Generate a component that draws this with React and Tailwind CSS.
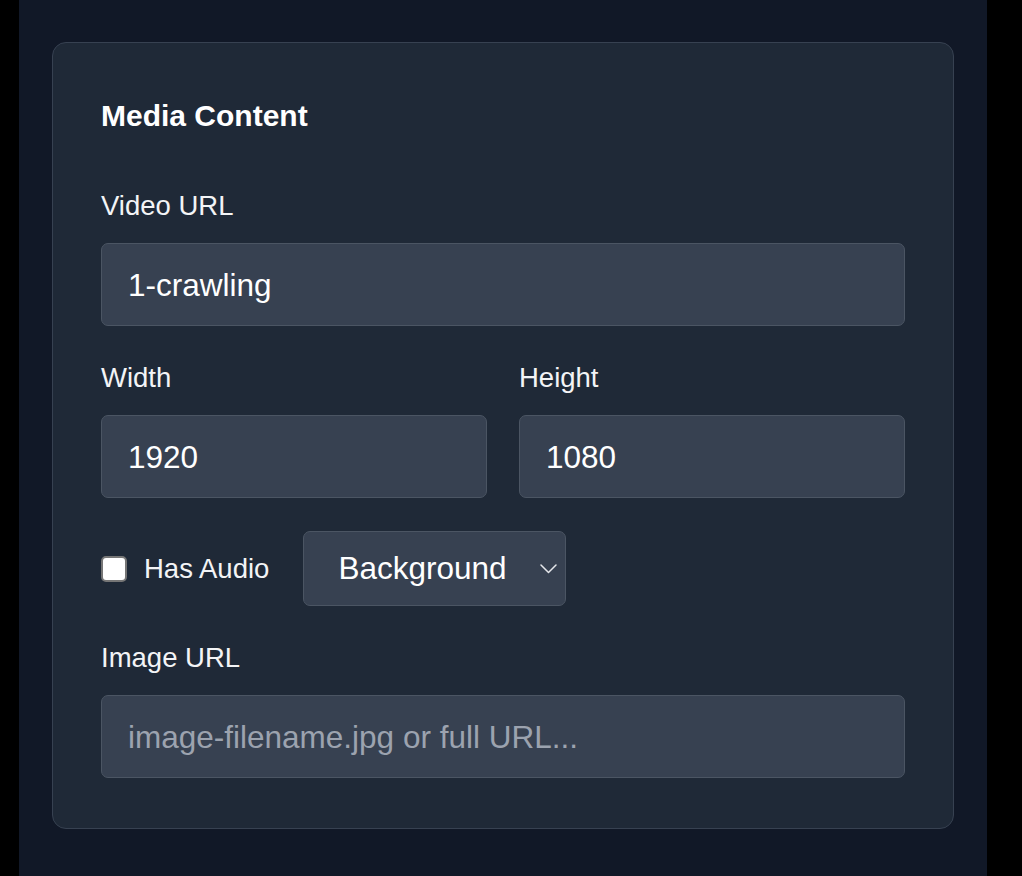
import React from 'react';

const font = { fontFamily: '"Liberation Sans", Arial, sans-serif' };

function Label({ children, className = '' }) {
  return <div className={`text-[27.5px] leading-[42px] text-gray-100 mb-[16px] ${className}`}>{children}</div>;
}

function Field({ value, placeholder }) {
  return (
    <div className="h-[83px] flex items-center px-[26px] pt-[2px] bg-[#374151] border border-[#4b5563] rounded-[7px] text-[31.5px]">
      {value ? <span className="text-white">{value}</span> : <span className="text-[#9ca3af]">{placeholder}</span>}
    </div>
  );
}

export default function App() {
  return (
    <div className="min-h-screen bg-black" style={font}>
      <div className="ml-[19px] w-[968px] min-h-screen bg-[#111827] px-[33px] pt-[42px] pb-[40px]">
        <div className="bg-[#1f2937] border border-[#374151] rounded-[14px] px-[48px] pt-[50px] pb-[50px]">
          <h2 className="text-[30px] leading-[45px] font-bold text-white">Media Content</h2>

          <Label className="mt-[47px]">Video URL</Label>
          <Field value="1-crawling" />

          <div className="grid grid-cols-2 gap-[32px] mt-[31px]">
            <div>
              <Label>Width</Label>
              <Field value="1920" />
            </div>
            <div>
              <Label>Height</Label>
              <Field value="1080" />
            </div>
          </div>

          <div className="flex items-center mt-[33px]">
            <span className="w-[26px] h-[26px] bg-white border-2 border-[#767676] rounded-[5px]" />
            <span className="ml-[17px] text-[27.5px] text-gray-100">Has Audio</span>
            <div className="ml-[34px] w-[263px] h-[75px] flex items-center pl-[34px] pr-[8px] bg-[#374151] border border-[#4b5563] rounded-[7px]">
              <span className="text-[31.5px] text-white">Background</span>
              <svg className="ml-auto" width="17" height="10" viewBox="0 0 17 10" fill="none">
                <polyline points="1,1 8.5,8.5 16,1" stroke="#e5e7eb" strokeWidth="1.5" strokeLinecap="round" strokeLinejoin="round" />
              </svg>
            </div>
          </div>

          <Label className="mt-[31px]">Image URL</Label>
          <Field placeholder="image-filename.jpg or full URL..." />
        </div>
      </div>
    </div>
  );
}
